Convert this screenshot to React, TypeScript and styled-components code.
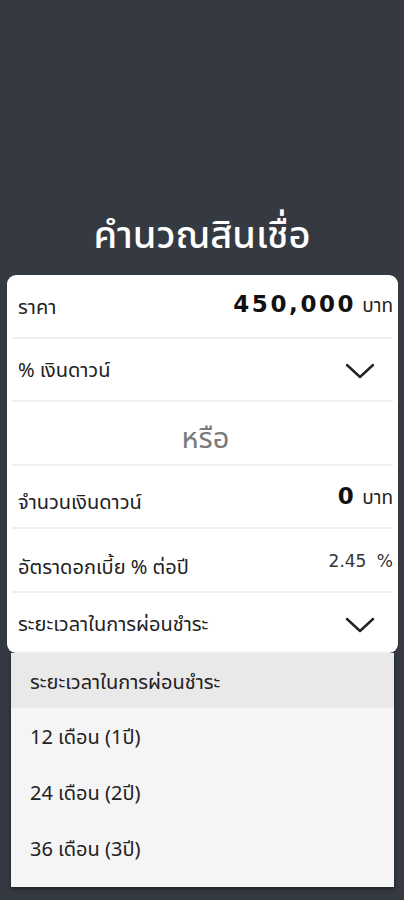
import React from "react";
import styled, { createGlobalStyle } from "styled-components";

const thai = `"Noto Sans Thai", Tahoma, sans-serif`;
const latin = `"DejaVu Sans", Verdana, sans-serif`;

const GlobalStyle = createGlobalStyle`
  html, body {
    margin: 0;
    padding: 0;
    background: #353a42;
  }
  body {
    font-family: ${thai};
    color: #222;
  }
`;

const Page = styled.div`
  width: 404px;
  height: 900px;
  padding-top: 212px;
  box-sizing: border-box;
`;

const Title = styled.h1`
  margin: 0 0 13px;
  text-align: center;
  color: #fff;
  font-size: 38px;
  font-weight: 500;
  line-height: 50px;
`;

const Card = styled.div`
  position: relative;
  margin: 0 6px 0 7px;
  background: #fff;
  border-radius: 9px;
`;

const Row = styled.div<{ $last?: boolean; $center?: boolean }>`
  display: flex;
  align-items: center;
  justify-content: ${(p) => (p.$center ? "center" : "space-between")};
  box-sizing: border-box;
  height: ${(p) => (p.$last ? 60 : 63.5)}px;
  margin: 0 5px;
  padding-left: 6px;
  border-bottom: ${(p) => (p.$last ? "none" : "2px solid #efefef")};
`;

const Label = styled.span<{ $shift?: number }>`
  font-size: 20px;
  color: #222;
  padding-top: ${(p) => (p.$shift ?? 0) * 2}px;
`;

const Value = styled.span<{ $shift?: number }>`
  display: flex;
  align-items: baseline;
  gap: 6px;
  padding-top: ${(p) => (p.$shift ?? 0) * 2}px;
`;

const Amount = styled.span`
  font-family: ${latin};
  font-size: 23px;
  font-weight: 700;
  letter-spacing: 2.6px;
  color: #111;
`;

const Unit = styled.span`
  font-size: 19px;
  color: #222;
`;

const Rate = styled.span`
  font-family: ${latin};
  font-size: 17px;
  color: #333;
  word-spacing: 5px;
`;

const Or = styled.span`
  font-size: 29px;
  color: #7a7a7a;
  padding-top: 12px;
`;

const Chevron = styled.svg`
  width: 30px;
  height: 16px;
  margin-right: 18px;
  margin-top: 4px;
`;

const Menu = styled.ul`
  position: absolute;
  top: 100%;
  left: 4px;
  right: 4px;
  margin: 0;
  padding: 0 0 11px;
  list-style: none;
  background: #f5f5f5;
  box-shadow: 0 2px 4px rgba(0, 0, 0, 0.45);
`;

const MenuItem = styled.li<{ $header?: boolean }>`
  display: flex;
  align-items: center;
  box-sizing: border-box;
  height: ${(p) => (p.$header ? 55 : 56)}px;
  padding: 5px 0 0 19px;
  font-size: 20px;
  color: #222;
  background: ${(p) => (p.$header ? "#e9e9e9" : "transparent")};
`;

function ChevronDown() {
  return (
    <Chevron viewBox="0 0 30 16" fill="none">
      <path d="M2 2 L15 14 L28 2" stroke="#222" strokeWidth="2.4" strokeLinecap="round" strokeLinejoin="round" />
    </Chevron>
  );
}

const terms = ["12 เดือน (1ปี)", "24 เดือน (2ปี)", "36 เดือน (3ปี)"];

export default function App() {
  return (
    <>
      <GlobalStyle />
      <Page>
        <Title>คำนวณสินเชื่อ</Title>
        <Card>
          <Row>
            <Label $shift={2}>ราคา</Label>
            <Value>
              <Amount>450,000</Amount>
              <Unit>บาท</Unit>
            </Value>
          </Row>
          <Row>
            <Label $shift={2}>% เงินดาวน์</Label>
            <ChevronDown />
          </Row>
          <Row $center>
            <Or>หรือ</Or>
          </Row>
          <Row>
            <Label $shift={7}>จำนวนเงินดาวน์</Label>
            <Value $shift={2}>
              <Amount>0</Amount>
              <Unit>บาท</Unit>
            </Value>
          </Row>
          <Row>
            <Label $shift={8}>อัตราดอกเบี้ย % ต่อปี</Label>
            <Value $shift={1}>
              <Rate>2.45 %</Rate>
            </Value>
          </Row>
          <Row $last>
            <Label $shift={2}>ระยะเวลาในการผ่อนชำระ</Label>
            <ChevronDown />
          </Row>
          <Menu>
            <MenuItem $header>ระยะเวลาในการผ่อนชำระ</MenuItem>
            {terms.map((t) => (
              <MenuItem key={t}>{t}</MenuItem>
            ))}
          </Menu>
        </Card>
      </Page>
    </>
  );
}
